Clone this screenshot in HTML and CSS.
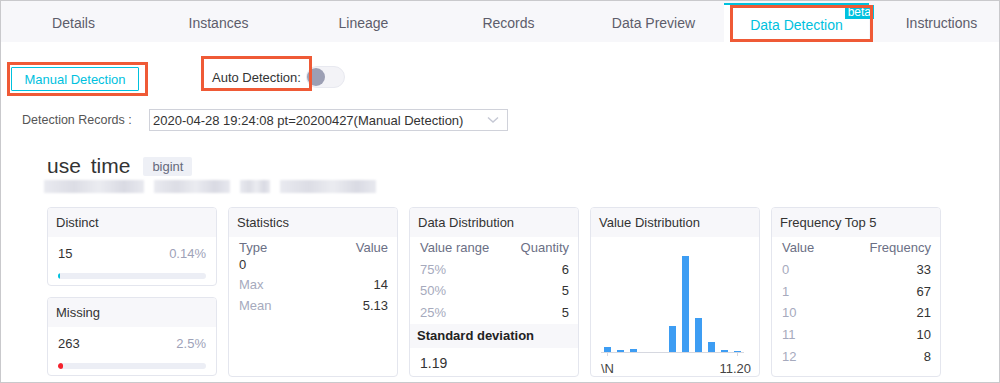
FILE: index.html
```html
<!DOCTYPE html>
<html lang="en">
<head>
    <meta charset="UTF-8">
    <meta name="viewport" content="width=device-width, initial-scale=1.0">
    <title>Data Detection</title>
    <link rel="stylesheet" href="styles.css">
</head>
<body>
    <div class="frame">
        <nav class="tabs">
            <div class="tab">Details</div>
            <div class="tab">Instances</div>
            <div class="tab">Lineage</div>
            <div class="tab">Records</div>
            <div class="tab">Data Preview</div>
            <div class="tab active">Data Detection<span class="beta">beta</span><span class="mark mark-tab"></span></div>
            <div class="tab">Instructions</div>
        </nav>

        <div class="content">
            <div class="actions">
                <div class="manual">
                    <button class="btn-outline">Manual Detection</button>
                    <span class="mark mark-manual"></span>
                </div>
                <div class="auto">
                    <span class="auto-label">Auto Detection:</span>
                    <span class="toggle"><span class="knob"></span></span>
                    <span class="mark mark-auto"></span>
                </div>
            </div>

            <div class="records">
                <label class="records-label">Detection Records :</label>
                <div class="select">
                    <span>2020-04-28 19:24:08 pt=20200427(Manual Detection)</span>
                    <svg class="chevron" width="12" height="8" viewBox="0 0 12 8"><polyline points="1,1.5 6,6 11,1.5" fill="none" stroke="#c5c8d4" stroke-width="1.4"/></svg>
                </div>
            </div>

            <div class="column">
                <div class="col-title">
                    <span class="col-name">use time</span>
                    <span class="col-type">bigint</span>
                </div>
                <div class="col-desc">
                    <span style="width: 100px"></span>
                    <span style="width: 76px"></span>
                    <span style="width: 30px"></span>
                    <span style="width: 96px"></span>
                </div>

                <div class="cards">
                    <div class="stack">
                        <div class="card card-short">
                            <div class="card-head">Distinct</div>
                            <div class="metric">
                                <div class="metric-row"><span>15</span><span class="pct">0.14%</span></div>
                                <div class="bar"><div class="bar-fill fill-cyan" style="width: 2px"></div></div>
                            </div>
                        </div>
                        <div class="card card-short">
                            <div class="card-head">Missing</div>
                            <div class="metric">
                                <div class="metric-row"><span>263</span><span class="pct">2.5%</span></div>
                                <div class="bar"><div class="bar-fill fill-red" style="width: 5px"></div></div>
                            </div>
                        </div>
                    </div>

                    <div class="card">
                        <div class="card-head">Statistics</div>
                        <div class="table stats">
                            <div class="row head"><span>Type</span><span>Value</span></div>
                            <div class="row zero"><span class="val">0</span></div>
                            <div class="row gap"><span class="key">Max</span><span class="val">14</span></div>
                            <div class="row"><span class="key">Mean</span><span class="val">5.13</span></div>
                        </div>
                    </div>

                    <div class="card">
                        <div class="card-head">Data Distribution</div>
                        <div class="table">
                            <div class="row head"><span>Value range</span><span>Quantity</span></div>
                            <div class="row"><span class="key">75%</span><span class="val">6</span></div>
                            <div class="row"><span class="key">50%</span><span class="val">5</span></div>
                            <div class="row"><span class="key">25%</span><span class="val">5</span></div>
                        </div>
                        <div class="sub-head">Standard deviation</div>
                        <div class="big-val">1.19</div>
                    </div>

                    <div class="card">
                        <div class="card-head">Value Distribution</div>
                        <svg class="chart" width="168" height="139" viewBox="0 0 168 139">
                            <line x1="10" y1="115.5" x2="153" y2="115.5" stroke="#d6d8e0" stroke-width="1"/>
                            <line x1="16.5" y1="115" x2="16.5" y2="119" stroke="#d6d8e0"/>
                            <line x1="146.5" y1="115" x2="146.5" y2="119" stroke="#d6d8e0"/>
                            <g fill="#3d9df3">
                                <rect x="13" y="110" width="7" height="5"/>
                                <rect x="26" y="113" width="7" height="2"/>
                                <rect x="39" y="112" width="7" height="3"/>
                                <rect x="78" y="89" width="7" height="26"/>
                                <rect x="91" y="19" width="7" height="96"/>
                                <rect x="104" y="81" width="7" height="34"/>
                                <rect x="117" y="105" width="7" height="10"/>
                                <rect x="130" y="113" width="7" height="2"/>
                                <rect x="143" y="114" width="7" height="1"/>
                            </g>
                            <text x="10" y="136" class="axis">\N</text>
                            <text x="160" y="136" class="axis" text-anchor="end">11.20</text>
                        </svg>
                    </div>

                    <div class="card">
                        <div class="card-head">Frequency Top 5</div>
                        <div class="table freq">
                            <div class="row head"><span>Value</span><span>Frequency</span></div>
                            <div class="row"><span class="key">0</span><span class="val">33</span></div>
                            <div class="row"><span class="key">1</span><span class="val">67</span></div>
                            <div class="row"><span class="key">10</span><span class="val">21</span></div>
                            <div class="row"><span class="key">11</span><span class="val">10</span></div>
                            <div class="row"><span class="key">12</span><span class="val">8</span></div>
                        </div>
                    </div>
                </div>
            </div>
        </div>
    </div>
</body>
</html>
```

FILE: styles.css
```css
body {
    margin: 0;
    font-family: "Liberation Sans", Arial, sans-serif;
    color: #333;
    background-color: #fff;
}
.frame {
    width: 1000px;
    height: 383px;
    box-sizing: border-box;
    border: 1px solid #c9c9cc;
    overflow: hidden;
}

/* tabs */
.tabs {
    display: flex;
    height: 41px;
    background-color: #f7f7fa;
}
.tab {
    position: relative;
    flex: 0 0 145px;
    text-align: center;
    font-size: 14px;
    line-height: 45px;
    color: #5d5d6b;
}
.tab.active {
    background-color: #fff;
    color: #00c1de;
    margin-top: 2px;
    border-top: 2px solid #00c1de;
    line-height: 41px;
    margin-left: -2px;
}
.beta {
    position: absolute;
    top: 0;
    right: -5px;
    background-color: #00c1de;
    color: #fff;
    font-size: 12px;
    line-height: 14px;
    padding: 0 3px;
}

/* red annotation frames */
.mark {
    position: absolute;
    border: 3px solid #ef5a36;
    pointer-events: none;
}
.mark-tab {
    left: 6px;
    top: 0;
    width: 137px;
    height: 31px;
}
.mark-manual {
    left: -4px;
    top: -5px;
    width: 135px;
    height: 28px;
}
.mark-auto {
    left: -11px;
    top: -10px;
    width: 105px;
    height: 29px;
}

/* actions */
.actions {
    display: flex;
    align-items: flex-start;
    padding: 25px 0 0 10px;
    height: 29px;
}
.manual {
    position: relative;
}
.btn-outline {
    display: block;
    width: 128px;
    height: 24px;
    padding: 0;
    background-color: #fff;
    border: 1px solid #00c1de;
    border-radius: 1px;
    color: #00c1de;
    font-family: inherit;
    font-size: 13px;
}
.auto {
    position: relative;
    display: flex;
    align-items: center;
    margin-left: 73px;
    margin-top: -1px;
}
.auto-label {
    font-size: 13px;
    color: #333;
}
.toggle {
    position: relative;
    margin-left: 5px;
    width: 39px;
    height: 22px;
    box-sizing: border-box;
    border: 1px solid #e8e9f0;
    border-radius: 11px;
    background-color: #f3f3f7;
}
.knob {
    position: absolute;
    left: 0;
    top: 1px;
    width: 18px;
    height: 18px;
    border-radius: 50%;
    background-color: #9c9fb4;
}

/* records */
.records {
    display: flex;
    align-items: center;
    margin-top: 13px;
    padding-left: 21px;
}
.records-label {
    font-size: 12.5px;
    color: #555;
    width: 127px;
}
.select {
    display: flex;
    align-items: center;
    justify-content: space-between;
    width: 359px;
    height: 22px;
    box-sizing: border-box;
    border: 1px solid #d0d2da;
    padding: 0 8px 0 3px;
    font-size: 13px;
    color: #333;
}

/* column detail */
.column {
    padding-left: 46px;
}
.col-title {
    display: flex;
    align-items: center;
    margin-top: 23px;
    height: 24px;
}
.col-name {
    font-size: 21px;
    color: #333;
    word-spacing: 4px;
}
.col-type {
    margin-left: 13px;
    background-color: #eef0f6;
    color: #666a7c;
    font-size: 13px;
    line-height: 19px;
    padding: 0 9px;
    border-radius: 2px;
}
.col-desc {
    display: flex;
    gap: 10px;
    margin: 2px 0 0 -3px;
    height: 14px;
}
.col-desc span {
    display: block;
    height: 13px;
    background: linear-gradient(90deg, #e9eaf0, #dcdde5 30%, #ebecf1 55%, #d9dae3 80%, #e8e9ef);
    filter: blur(1px);
}

/* cards */
.cards {
    display: grid;
    grid-template-columns: repeat(5, 170px);
    column-gap: 11px;
    margin-top: 13px;
}
.stack {
    display: flex;
    flex-direction: column;
    gap: 11px;
}
.card {
    border: 1px solid #e4e6ee;
    border-radius: 4px;
    height: 170px;
    box-sizing: border-box;
    overflow: hidden;
}
.card-short {
    height: 79px;
}
.card-head {
    background-color: #f7f7fa;
    height: 29px;
    line-height: 29px;
    padding-left: 8px;
    font-size: 13px;
    color: #333;
}
.metric {
    padding: 9px 10px 0 10px;
}
.metric-row {
    display: flex;
    justify-content: space-between;
    font-size: 13px;
    line-height: 16px;
}
.pct {
    color: #9ea2b8;
}
.bar {
    margin-top: 11px;
    height: 6px;
    border-radius: 3px;
    background-color: #eceef5;
    overflow: hidden;
}
.bar-fill {
    height: 100%;
    border-radius: 3px;
}
.fill-cyan {
    background-color: #00c1de;
}
.fill-red {
    background-color: #f5222d;
}

.table {
    padding: 0 9px 0 10px;
    font-size: 13px;
}
.row {
    display: flex;
    justify-content: space-between;
    line-height: 21.5px;
}
.freq .row {
    line-height: 21.8px;
}
.row.head {
    color: #6b6f85;
}
.stats .row {
    line-height: 21px;
}
.stats .row.zero {
    line-height: 13px;
}
.stats .row.gap {
    margin-top: 3px;
}
.key {
    color: #a6aabd;
}
.val {
    color: #333;
}
.sub-head {
    margin-top: 1px;
    background-color: #f7f7fa;
    height: 24px;
    line-height: 24px;
    padding-left: 7px;
    font-size: 13px;
    font-weight: bold;
    color: #222;
}
.big-val {
    padding: 5px 0 0 10px;
    font-size: 14px;
    line-height: 20px;
    color: #333;
}
.chart {
    display: block;
}
.axis {
    font-size: 13px;
    fill: #444;
    font-family: "Liberation Sans", Arial, sans-serif;
}
```
